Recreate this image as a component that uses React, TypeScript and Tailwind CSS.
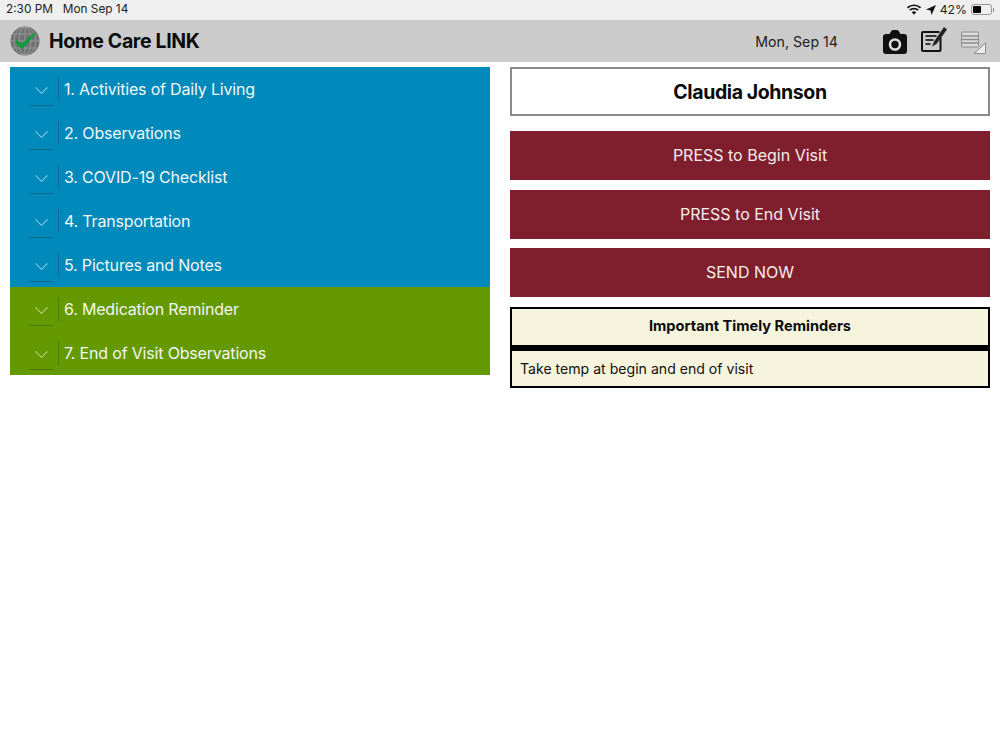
import { ChevronDown } from "lucide-react"

const sections = [
  { label: "1. Activities of Daily Living", color: "bg-[#0089bb]", line: "bg-[#0a6a90]" },
  { label: "2. Observations", color: "bg-[#0089bb]", line: "bg-[#0a6a90]" },
  { label: "3. COVID-19 Checklist", color: "bg-[#0089bb]", line: "bg-[#0a6a90]" },
  { label: "4. Transportation", color: "bg-[#0089bb]", line: "bg-[#0a6a90]" },
  { label: "5. Pictures and Notes", color: "bg-[#0089bb]", line: "bg-[#0a6a90]" },
  { label: "6. Medication Reminder", color: "bg-[#659900]", line: "bg-[#4f7800]" },
  { label: "7. End of Visit Observations", color: "bg-[#659900]", line: "bg-[#4f7800]" },
]

const actions = ["PRESS to Begin Visit", "PRESS to End Visit", "SEND NOW"]

function Globe() {
  return (
    <svg width="30" height="30" viewBox="0 0 30 30">
      <circle cx="15" cy="15" r="14.5" fill="#727272" />
      <g fill="none" stroke="#a0a0a0" strokeWidth="0.8">
        <ellipse cx="15" cy="15" rx="6" ry="14" />
        <ellipse cx="15" cy="15" rx="11" ry="14" />
        <path d="M15 1v28M1 15h28M3 8h24M3 22h24" />
      </g>
      <path d="M4.500 16l3-2 4 4L24 6.500l1.500 1.500L12 23.500z" fill="#0c9a3a" />
    </svg>
  )
}

function StatusIcons() {
  return (
    <div className="flex items-center">
      <svg width="14" height="11" viewBox="0 0 14 11">
        <path d="M0.500 3.800a9.500 9.500 0 0 1 13 0" fill="none" stroke="#111" strokeWidth="1.700" />
        <path d="M2.800 6.200a6.200 6.200 0 0 1 8.400 0" fill="none" stroke="#111" strokeWidth="1.700" />
        <path d="M4.800 8.300a3.200 3.200 0 0 1 4.400 0L7 10.800z" fill="#111" />
      </svg>
      <svg width="10" height="10" viewBox="0 0 10 10" className="ml-[5px]">
        <path d="M10 0L0 4.500l4.500 1L5.500 10z" fill="#111" />
      </svg>
      <span className="ml-[4px] text-[12.2px] text-[#222]">42%</span>
      <div className="ml-[4px] flex h-[11px] w-[21px] items-center rounded-[3px] border border-[#999] p-[1px]">
        <div className="h-full w-[8px] rounded-[1px] bg-black" />
      </div>
      <div className="ml-[1px] h-[4px] w-[1px] bg-[#888]" />
    </div>
  )
}

function HeaderIcons() {
  return (
    <div className="flex items-center gap-[14px]">
      <svg width="24" height="24" viewBox="0 0 24 24" className="mt-[1px]">
        <path
          d="M3 4h3.500L8 1.500q.5-1.500 2-1.500h4q1.500 0 2 1.500L17.500 4H21a3 3 0 0 1 3 3v14a3 3 0 0 1-3 3H3a3 3 0 0 1-3-3V7a3 3 0 0 1 3-3z"
          fill="#111"
        />
        <circle cx="12" cy="14.500" r="5" fill="none" stroke="#ddd" strokeWidth="2.600" />
      </svg>
      <svg width="26" height="26" viewBox="0 0 26 26" className="mb-[4px]">
        <path d="M19.500 11v13a1 1 0 0 1-1 1H2a1 1 0 0 1-1-1V7a1 1 0 0 1 1-1h16.500" fill="none" stroke="#111" strokeWidth="2" />
        <path d="M4.500 10h11M4.500 14h8M4.500 18h5" stroke="#333" strokeWidth="1.800" />
        <path d="M11 20.500l2-5L23 1l3 2.500L15.500 18z" fill="#222" />
      </svg>
      <svg width="25" height="26" viewBox="0 0 25 26">
        <rect x="0.500" y="4" width="17" height="15" rx="1" fill="#dcdcdc" stroke="#8c8c8c" />
        <path d="M1 8h16M1 11.500h16M1 15h16" stroke="#8c8c8c" strokeWidth="1.300" />
        <path d="M24.500 15v10.500h-11.500z" fill="#ececec" stroke="#8c8c8c" strokeWidth="1" />
      </svg>
    </div>
  )
}

export default function App() {
  return (
    <div className="flex h-[750px] w-[1000px] flex-col bg-white font-['Inter',sans-serif]">
      {/* status bar */}
      <div className="flex h-[20px] items-center justify-between bg-[#efefef] pl-[6px] pr-[6px] text-[11.8px] text-[#222]">
        <div className="flex gap-[10px]">
          <span>2:30 PM</span>
          <span>Mon Sep 14</span>
        </div>
        <StatusIcons />
      </div>

      {/* header */}
      <div className="flex h-[42px] items-center justify-between bg-[#cbcbcb] pl-[10px] pr-[14px]">
        <div className="flex items-center gap-[9px]">
          <Globe />
          <span className="pt-[1px] text-[19.5px] font-bold tracking-[-0.35px] text-[#0b0b0b]">Home Care LINK</span>
        </div>
        <div className="flex items-center">
          <span className="mr-[45px] pt-[1px] text-[14.2px] text-[#222]">Mon, Sep 14</span>
          <HeaderIcons />
        </div>
      </div>

      <div className="grid grid-cols-2 items-start gap-[20px] px-[10px] pt-[5px]">
        {/* accordion */}
        <div>
          {sections.map((s) => (
            <div key={s.label} className={`relative flex h-[44px] items-center ${s.color}`}>
              <div className="flex w-[48px] shrink-0 justify-center pl-[15px] pt-[2px]">
                <ChevronDown size={23} strokeWidth={1.2} className="text-white opacity-50" />
              </div>
              <div className={`h-[24px] w-px ${s.line}`} />
              <span className="ml-[5px] text-[16px] tracking-[-0.18px] text-[#f2f6f4]">{s.label}</span>
              <div className={`absolute bottom-[5px] left-[19px] h-px w-[24px] ${s.line}`} />
            </div>
          ))}
        </div>

        {/* right column */}
        <div className="flex flex-col">
          <div className="flex h-[49px] items-center justify-center border-2 border-[#8a8a8a] bg-white pt-[2px] text-[19.5px] font-bold tracking-[-0.4px] text-[#0b0b0b]">
            Claudia Johnson
          </div>
          <div className="mt-[15px] flex flex-col gap-[9.5px]">
            {actions.map((a) => (
              <div
                key={a}
                className="flex h-[49px] items-center justify-center bg-[#7f1f2d] pb-[1px] text-[16px] text-[#f5ecec]"
              >
                {a}
              </div>
            ))}
          </div>
          <div className="mt-[10px] flex h-[41px] items-center justify-center border-2 border-b-[3px] border-black bg-[#f7f4de] text-[14.6px] font-bold text-[#0b0b0b]">
            Important Timely Reminders
          </div>
          <div className="flex h-[40px] items-center border-2 border-t-[3px] border-black bg-[#f7f4de] pl-[8px] text-[14.1px] text-[#111]">
            Take temp at begin and end of visit
          </div>
        </div>
      </div>
    </div>
  )
}
